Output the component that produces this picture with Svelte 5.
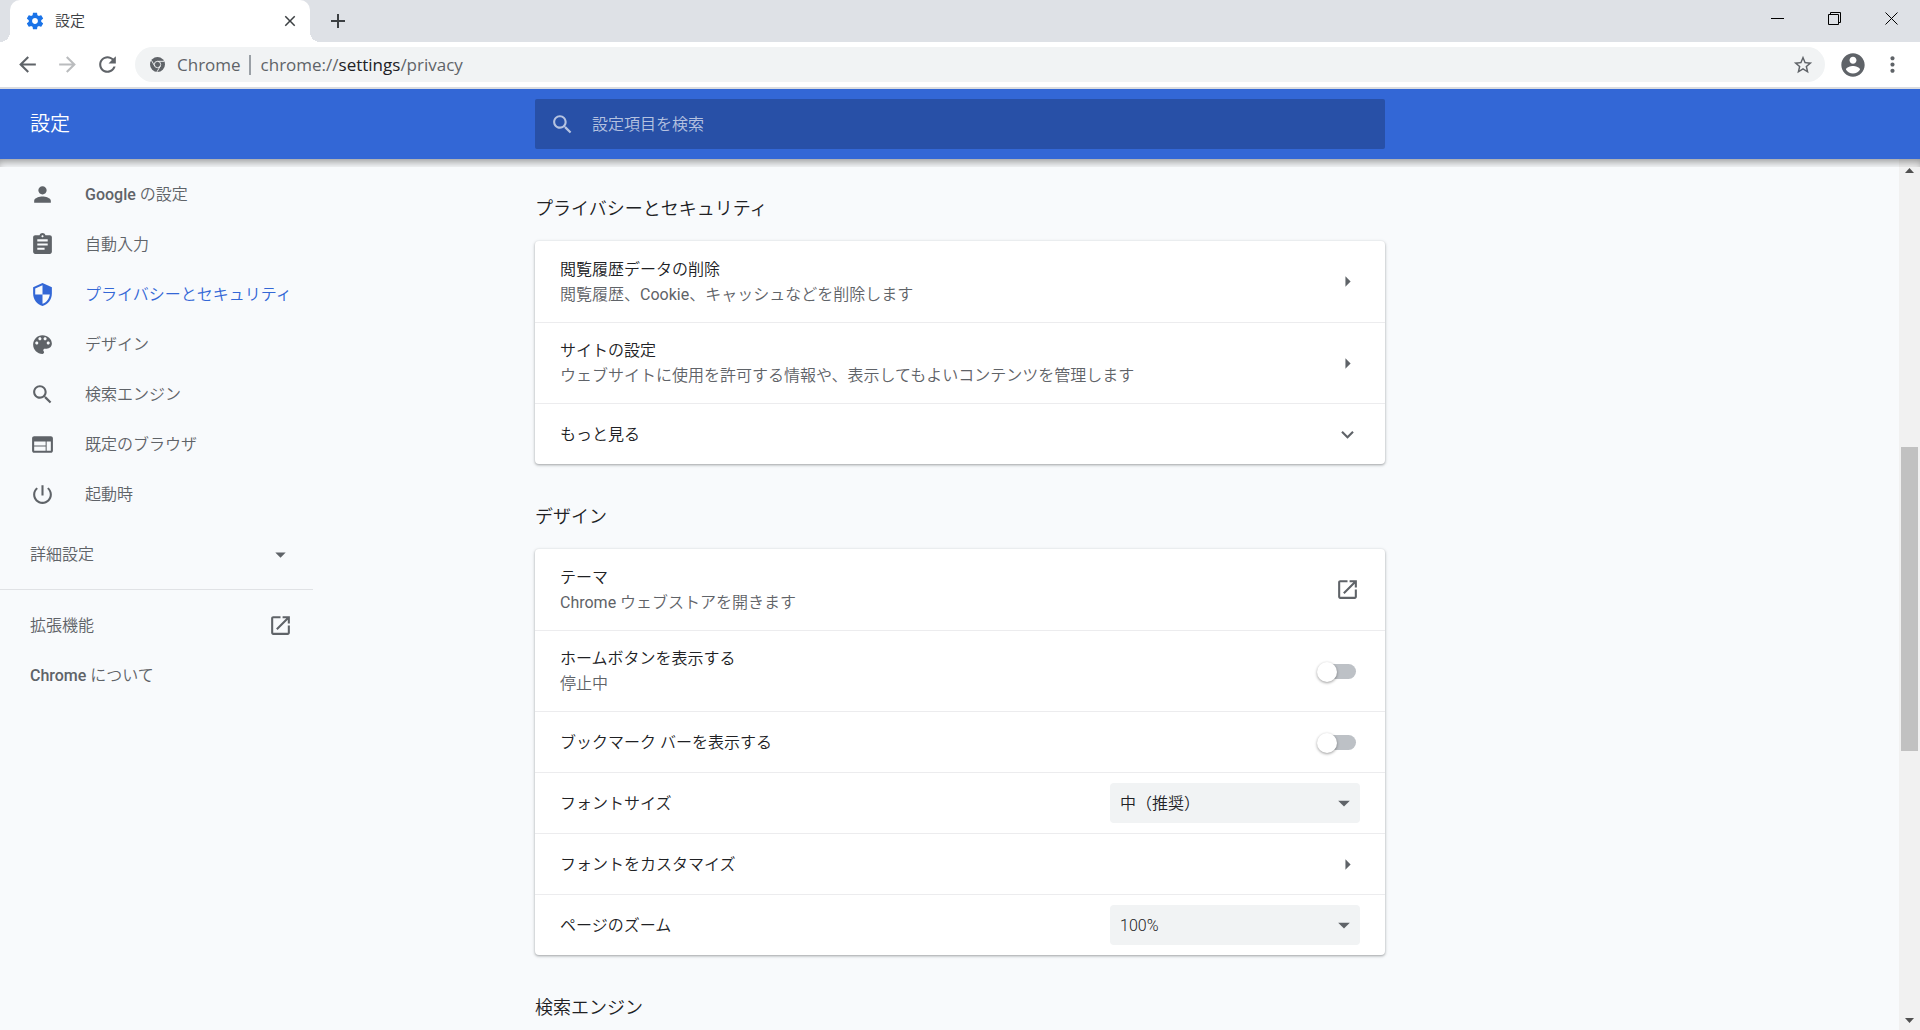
<script>
	const ICONS = {
		person: 'M12 12c2.21 0 4-1.79 4-4s-1.79-4-4-4-4 1.79-4 4 1.79 4 4 4zm0 2c-2.67 0-8 1.34-8 4v2h16v-2c0-2.66-5.33-4-8-4z',
		assignment: 'M19 3h-4.18C14.4 1.84 13.3 1 12 1c-1.3 0-2.4.84-2.82 2H5c-1.1 0-2 .9-2 2v14c0 1.1.9 2 2 2h14c1.1 0 2-.9 2-2V5c0-1.1-.9-2-2-2zm-7 0c.55 0 1 .45 1 1s-.45 1-1 1-1-.45-1-1 .45-1 1-1zm2 14H7v-2h7v2zm3-4H7v-2h10v2zm0-4H7V7h10v2z',
		security: 'M12 1L3 5v6c0 5.55 3.84 10.74 9 12 5.16-1.26 9-6.45 9-12V5l-9-4zm0 10.99h7c-.53 4.12-3.28 7.79-7 8.94V12H5V6.3l7-3.11v8.8z',
		palette: 'M12 3c-4.97 0-9 4.03-9 9s4.03 9 9 9c.83 0 1.5-.67 1.5-1.5 0-.39-.15-.74-.39-1.01-.23-.26-.38-.61-.38-.99 0-.83.67-1.5 1.5-1.5H16c2.76 0 5-2.24 5-5 0-4.42-4.03-8-9-8zm-5.5 9c-.83 0-1.5-.67-1.5-1.5S5.67 9 6.5 9 8 9.67 8 10.5 7.33 12 6.5 12zm3-4C8.67 8 8 7.33 8 6.5S8.67 5 9.5 5s1.5.67 1.5 1.5S10.33 8 9.5 8zm5 0c-.83 0-1.5-.67-1.5-1.5S13.67 5 14.5 5s1.5.67 1.5 1.5S15.33 8 14.5 8zm3 4c-.83 0-1.5-.67-1.5-1.5S16.67 9 17.5 9s1.5.67 1.5 1.5-.67 1.5-1.5 1.5z',
		search: 'M15.5 14h-.79l-.28-.27C15.41 12.59 16 11.11 16 9.5 16 5.91 13.09 3 9.5 3S3 5.91 3 9.5 5.91 16 9.5 16c1.61 0 3.09-.59 4.23-1.57l.27.28v.79l5 4.99L20.49 19l-4.99-5zm-6 0C7.01 14 5 11.99 5 9.5S7.01 5 9.5 5 14 7.01 14 9.5 11.99 14 9.5 14z',
		web: 'M20 4H4c-1.1 0-1.99.9-1.99 2L2 18c0 1.1.9 2 2 2h16c1.1 0 2-.9 2-2V6c0-1.1-.9-2-2-2zm-5 14H4v-4h11v4zm0-5H4V9h11v4zm5 5h-4V9h4v9z',
		power: 'M13 3h-2v10h2V3zm4.83 2.17l-1.42 1.42C17.99 7.86 19 9.81 19 12c0 3.87-3.13 7-7 7s-7-3.13-7-7c0-2.19 1.01-4.14 2.58-5.42L6.17 5.17C4.23 6.82 3 9.26 3 12c0 4.97 4.03 9 9 9s9-4.03 9-9c0-2.74-1.23-5.18-3.17-6.83z',
		external: 'M19 19H5V5h7V3H5c-1.11 0-2 .9-2 2v14c0 1.1.89 2 2 2h14c1.1 0 2-.9 2-2v-7h-2v7zM14 3v2h3.59l-9.83 9.83 1.41 1.41L19 6.41V10h2V3h-7z',
		arrowRight: 'M10 7l5 5-5 5z',
		arrowDown: 'M7 10l5 5 5-5z',
		expand: 'M16.59 8.59L12 13.17 7.41 8.59 6 10l6 6 6-6z',
		back: 'M20 11H7.83l5.59-5.59L12 4l-8 8 8 8 1.41-1.41L7.83 13H20v-2z',
		forward: 'M4 11h12.17l-5.59-5.59L12 4l8 8-8 8-1.41-1.41L16.17 13H4v-2z',
		reload: 'M17.65 6.35C16.2 4.9 14.21 4 12 4c-4.42 0-7.99 3.58-7.99 8s3.57 8 7.99 8c3.73 0 6.84-2.55 7.73-6h-2.08c-.82 2.33-3.04 4-5.65 4-3.31 0-6-2.69-6-6s2.69-6 6-6c1.66 0 3.14.69 4.22 1.78L13 11h7V4l-2.35 2.35z',
		gear: 'M19.43 12.98c.04-.32.07-.64.07-.98s-.03-.66-.07-.98l2.11-1.65c.19-.15.24-.42.12-.64l-2-3.46c-.12-.22-.39-.3-.61-.22l-2.49 1c-.52-.4-1.08-.73-1.69-.98l-.38-2.65C14.46 2.18 14.25 2 14 2h-4c-.25 0-.46.18-.49.42l-.38 2.65c-.61.25-1.17.59-1.69.98l-2.49-1c-.23-.09-.49 0-.61.22l-2 3.46c-.13.22-.07.49.12.64l2.11 1.65c-.04.32-.07.65-.07.98s.03.66.07.98l-2.11 1.65c-.19.15-.24.42-.12.64l2 3.46c.12.22.39.3.61.22l2.49-1c.52.4 1.08.73 1.69.98l.38 2.65c.03.24.24.42.49.42h4c.25 0 .46-.18.49-.42l.38-2.65c.61-.25 1.17-.59 1.69-.98l2.49 1c.23.09.49 0 .61-.22l2-3.46c.12-.22.07-.49-.12-.64l-2.11-1.65zM12 15.5c-1.93 0-3.5-1.57-3.5-3.5s1.57-3.5 3.5-3.5 3.5 1.57 3.5 3.5-1.57 3.5-3.5 3.5z',
		star: 'M22 9.24l-7.19-.62L12 2 9.19 8.63 2 9.24l5.46 4.73L5.82 21 12 17.27 18.18 21l-1.63-7.03L22 9.24zM12 15.4l-3.76 2.27 1-4.28-3.32-2.88 4.38-.38L12 6.1l1.71 4.04 4.38.38-3.32 2.88 1 4.28L12 15.4z',
		account: 'M12 2C6.48 2 2 6.48 2 12s4.48 10 10 10 10-4.48 10-10S17.52 2 12 2zm0 3c1.66 0 3 1.34 3 3s-1.34 3-3 3-3-1.34-3-3 1.34-3 3-3zm0 14.2c-2.5 0-4.71-1.28-6-3.22.03-1.99 4-3.08 6-3.08 1.99 0 5.97 1.09 6 3.08-1.29 1.94-3.5 3.22-6 3.22z',
		more: 'M12 8c1.1 0 2-.9 2-2s-.9-2-2-2-2 .9-2 2 .9 2 2 2zm0 2c-1.1 0-2 .9-2 2s.9 2 2 2 2-.9 2-2-.9-2-2-2zm0 6c-1.1 0-2 .9-2 2s.9 2 2 2 2-.9 2-2-.9-2-2-2z',
		close: 'M19 6.41L17.59 5 12 10.59 6.41 5 5 6.41 10.59 12 5 17.59 6.41 19 12 13.41 17.59 19 19 17.59 13.41 12z'
	};

	const menu = [
		{ icon: 'person', label: 'Google の設定' },
		{ icon: 'assignment', label: '自動入力' },
		{ icon: 'security', label: 'プライバシーとセキュリティ' },
		{ icon: 'palette', label: 'デザイン' },
		{ icon: 'search', label: '検索エンジン' },
		{ icon: 'web', label: '既定のブラウザ' },
		{ icon: 'power', label: '起動時' }
	];

	const sections = [
		{
			title: 'プライバシーとセキュリティ',
			rows: [
				{ type: 'link', icon: 'arrowRight', label: '閲覧履歴データの削除', sub: '閲覧履歴、Cookie、キャッシュなどを削除します' },
				{ type: 'link', icon: 'arrowRight', label: 'サイトの設定', sub: 'ウェブサイトに使用を許可する情報や、表示してもよいコンテンツを管理します' },
				{ type: 'link', icon: 'expand', label: 'もっと見る' }
			]
		},
		{
			title: 'デザイン',
			rows: [
				{ type: 'link', icon: 'external', label: 'テーマ', sub: 'Chrome ウェブストアを開きます' },
				{ type: 'toggle', id: 'home-button', label: 'ホームボタンを表示する', sub: '停止中' },
				{ type: 'toggle', id: 'bookmark-bar', label: 'ブックマーク バーを表示する' },
				{ type: 'select', id: 'font-size', label: 'フォントサイズ', options: ['中（推奨）', '極小', '小', '大', '極大'] },
				{ type: 'link', icon: 'arrowRight', label: 'フォントをカスタマイズ' },
				{ type: 'select', id: 'page-zoom', label: 'ページのズーム', options: ['100%', '75%', '125%', '150%'] }
			]
		},
		{ title: '検索エンジン', rows: [] }
	];

	let active = $state('security');
	let query = $state('');

	// odd parts are latin words, they get a heavier weight than the kana
	function parts(text) {
		return text.split(/([A-Za-z]+)/);
	}
</script>

{#snippet icon(name)}
	<svg class="icon" viewBox="0 0 24 24" aria-hidden="true"><path d={ICONS[name]} /></svg>
{/snippet}

{#snippet mixed(text)}
	{#each parts(text) as part, i}{#if i % 2}<span class="latin">{part}</span>{:else}{part}{/if}{/each}
{/snippet}

{#snippet rowText(row)}
	<span class="row-text">
		<span class="label">{@render mixed(row.label)}</span>
		{#if row.sub}<span class="sub">{@render mixed(row.sub)}</span>{/if}
	</span>
{/snippet}

<div class="window">
	<div class="tab-strip">
		<div class="tab">
			{@render icon('gear')}
			<span class="tab-title">設定</span>
			<button class="tab-close" aria-label="タブを閉じる">{@render icon('close')}</button>
		</div>
		<button class="new-tab" aria-label="新しいタブ">
			<svg viewBox="0 0 16 16"><path d="M8 1v14M1 8h14" /></svg>
		</button>
		<div class="window-buttons">
			<button aria-label="最小化"><svg viewBox="0 0 14 14"><path d="M0 6.5h13" /></svg></button>
			<button aria-label="元に戻す"><svg viewBox="0 0 14 14"><path d="M.5 2.500h10v10h-10zM2.5 2.500v-2h10v10h-2" /></svg></button>
			<button aria-label="閉じる"><svg viewBox="0 0 14 14"><path d="M.5 .5l12 12M12.5 .5l-12 12" /></svg></button>
		</div>
	</div>

	<div class="toolbar">
		<button aria-label="戻る">{@render icon('back')}</button>
		<button aria-label="進む" disabled>{@render icon('forward')}</button>
		<button aria-label="再読み込み">{@render icon('reload')}</button>
		<div class="omnibox">
			<svg class="site" viewBox="0 0 16 16" aria-hidden="true">
				<circle cx="8" cy="8" r="8" fill="#5f6368" />
				<g fill="none" stroke="#f1f3f4" stroke-width="1">
					<circle cx="8" cy="8" r="3.4" />
					<path d="M8 4.6h7.2M5.05 9.7L1.5 3.6M10.95 9.7L7.4 15.9" />
				</g>
			</svg>
			<span class="site-name">Chrome</span>
			<span class="url">chrome://<b>settings</b>/privacy</span>
			<button class="bookmark" aria-label="ブックマーク">{@render icon('star')}</button>
		</div>
		<button class="profile" aria-label="プロフィール">{@render icon('account')}</button>
		<button class="more" aria-label="メニュー">{@render icon('more')}</button>
	</div>

	<header>
		<h1>設定</h1>
		<label class="search">
			{@render icon('search')}
			<input type="text" bind:value={query} placeholder="設定項目を検索" aria-label="設定項目を検索" />
		</label>
	</header>

	<main>
		<nav>
			{#each menu as item}
				<a href="#{item.icon}" class:active={active === item.icon} onclick={() => (active = item.icon)}>
					{@render icon(item.icon)}
					<span>{@render mixed(item.label)}</span>
				</a>
			{/each}
			<button class="advanced"><span>詳細設定</span>{@render icon('arrowDown')}</button>
			<hr />
			<a class="plain" href="#extensions"><span>拡張機能</span>{@render icon('external')}</a>
			<a class="plain" href="#about"><span>{@render mixed('Chrome について')}</span></a>
		</nav>

		<div class="content">
			{#each sections as section}
				<section>
					<h2>{section.title}</h2>
					<div class="card">
						{#each section.rows as row}
							{#if row.type === 'link'}
								<button class="row" class:two={row.sub}>
									{@render rowText(row)}
									{@render icon(row.icon)}
								</button>
							{:else if row.type === 'toggle'}
								<label class="row" class:two={row.sub} for={row.id}>
									{@render rowText(row)}
									<input class="toggle" type="checkbox" id={row.id} />
								</label>
							{:else}
								<div class="row">
									<label for={row.id}>{@render rowText(row)}</label>
									<div class="select">
										<select id={row.id}>
											{#each row.options as option}
												<option>{option}</option>
											{/each}
										</select>
										{@render icon('arrowDown')}
									</div>
								</div>
							{/if}
						{/each}
					</div>
				</section>
			{/each}
		</div>

		<div class="scrollbar" aria-hidden="true">
			<svg viewBox="0 0 9 5"><path d="M0 5L4.500 0 9 5z" /></svg>
			<div class="track"><div class="thumb"></div></div>
			<svg viewBox="0 0 9 5"><path d="M0 0h9L4.500 5z" /></svg>
		</div>
	</main>
</div>

<style>
	:global(body) {
		margin: 0;
	}

	.window {
		height: 100vh;
		display: flex;
		flex-direction: column;
		overflow: hidden;
		background: #f8fafc;
		color: #202124;
		font: 350 16px/25px Roboto, 'Noto Sans CJK JP', sans-serif;
	}

	button {
		display: flex;
		align-items: center;
		justify-content: center;
		padding: 0;
		border: none;
		background: none;
		color: inherit;
		font: inherit;
	}

	input, select {
		font: inherit;
	}

	.icon {
		width: 25px;
		height: 25px;
		flex: none;
		fill: currentColor;
	}

	.latin {
		font-weight: 400;
	}

	/* browser frame */
	.tab-strip {
		display: flex;
		height: 42px;
		flex: none;
		background: #dee1e6;
	}

	.tab {
		position: relative;
		display: flex;
		align-items: center;
		box-sizing: border-box;
		width: 300px;
		margin-left: 10px;
		padding: 0 10px 0 15px;
		background: #fff;
		border-radius: 10px 10px 0 0;
		color: #3c4043;
	}

	.tab::before, .tab::after {
		content: '';
		position: absolute;
		bottom: 0;
		width: 10px;
		height: 10px;
	}

	.tab::before {
		right: 100%;
		background: radial-gradient(circle at 0 0, #dee1e6 10px, #fff 10px);
	}

	.tab::after {
		left: 100%;
		background: radial-gradient(circle at 100% 0, #dee1e6 10px, #fff 10px);
	}

	.tab > .icon {
		width: 20px;
		height: 20px;
		color: #1a73e8;
	}

	.tab-title {
		flex: 1;
		margin-left: 10px;
		font-size: 15px;
	}

	.tab-close {
		width: 20px;
		height: 20px;
	}

	.tab-close .icon {
		width: 18px;
		height: 18px;
	}

	.new-tab {
		width: 35px;
		margin-left: 10px;
		color: #3c4043;
	}

	.new-tab svg {
		width: 16px;
		height: 16px;
		stroke: currentColor;
		stroke-width: 2;
	}

	.window-buttons {
		display: flex;
		margin-left: auto;
	}

	.window-buttons button {
		width: 57px;
		height: 38px;
		color: #000;
	}

	.window-buttons svg {
		width: 14px;
		height: 14px;
		fill: none;
		stroke: currentColor;
	}

	.toolbar {
		display: flex;
		align-items: center;
		flex: none;
		height: 45px;
		padding: 0 10px;
		gap: 5px;
		background: #fff;
		border-bottom: 2px solid #dadce0;
		color: #5f6368;
	}

	.toolbar > button {
		width: 35px;
		height: 35px;
	}

	.toolbar > button:disabled {
		color: #babcbe;
	}

	.toolbar > button .icon {
		width: 25px;
		height: 25px;
	}

	.omnibox {
		display: flex;
		align-items: center;
		flex: 1;
		height: 35px;
		margin-left: 5px;
		padding: 0 11px 0 15px;
		background: #f1f3f4;
		border-radius: 18px;
		color: #5f6368;
		font-family: 'Open Sans', sans-serif;
		font-weight: 400;
		font-size: 17px;
	}

	.site {
		width: 15px;
		height: 15px;
		margin-right: 12px;
	}

	.site-name {
		line-height: 20px;
		padding-right: 8px;
		margin-right: 10px;
		border-right: 2px solid #9aa0a6;
	}

	.url {
		flex: 1;
	}

	.url b {
		color: #202124;
		font-weight: 400;
	}

	.bookmark .icon {
		width: 22px;
		height: 22px;
	}

	.toolbar > .profile {
		margin-left: 5px;
	}

	.toolbar > .profile .icon {
		width: 28px;
		height: 28px;
	}

	/* settings page */
	header, main {
		display: grid;
		grid-template-columns: minmax(313px, 1fr) minmax(0, 850px) minmax(21px, 1fr);
	}

	header {
		position: relative;
		z-index: 1;
		flex: none;
		align-items: center;
		height: 70px;
		background: #3367d6;
		color: #fff;
	}

	header::after {
		content: '';
		position: absolute;
		top: 100%;
		left: 0;
		right: 0;
		height: 8px;
		box-shadow: inset 0 6px 8px -3px rgba(0, 0, 0, 0.4);
		pointer-events: none;
	}

	h1 {
		margin: 0;
		padding-left: 30px;
		font-size: 20px;
		font-weight: 350;
	}

	.search {
		display: flex;
		align-items: center;
		height: 50px;
		padding: 0 15px;
		border-radius: 2px;
		background: #2850a7;
		color: rgba(255, 255, 255, 0.66);
	}

	.search input {
		flex: 1;
		margin-left: 15px;
		border: none;
		outline: none;
		background: none;
		color: #fff;
	}

	.search input::placeholder {
		color: rgba(255, 255, 255, 0.66);
	}

	main {
		flex: 1;
		min-height: 0;
	}

	nav {
		width: 313px;
		padding-top: 10px;
		color: #5f6368;
	}

	nav .latin {
		font-weight: 500;
	}

	nav a, .advanced {
		display: flex;
		align-items: center;
		gap: 30px;
		height: 50px;
		padding: 0 20px 0 30px;
		color: inherit;
		text-decoration: none;
	}

	nav a.active {
		color: #3367d6;
	}

	.advanced {
		box-sizing: border-box;
		width: 100%;
		margin: 10px 0;
	}

	.plain, .advanced {
		justify-content: space-between;
	}

	hr {
		margin: 0 0 10px;
		border: none;
		border-top: 1px solid #e0e2e5;
	}

	.content {
		min-height: 0;
		overflow: hidden;
		/* leaves room for the card shadows beside the clipped column */
		margin: 0 -5px;
		padding: 38px 5px 0;
	}

	section + section {
		margin-top: 41px;
	}

	h2 {
		margin: 0 0 20px;
		font-size: 18px;
		line-height: 24px;
		font-weight: 350;
	}

	.card {
		background: #fff;
		border-radius: 4px;
		box-shadow: 0 1px 2px rgba(60, 64, 67, 0.3), 0 1px 3px 1px rgba(60, 64, 67, 0.15);
	}

	.row {
		display: flex;
		align-items: center;
		justify-content: space-between;
		box-sizing: border-box;
		width: 100%;
		min-height: 61px;
		padding: 0 25px;
		text-align: left;
	}

	.row.two {
		min-height: 81px;
	}

	.row + .row {
		border-top: 1px solid #ececee;
	}

	.row .icon {
		color: #5f6368;
	}

	.label, .sub {
		display: block;
	}

	.sub {
		color: #5f6368;
	}

	.toggle {
		appearance: none;
		position: relative;
		width: 35px;
		height: 15px;
		margin: 0 4px;
		border-radius: 8px;
		background: #bdc1c6;
	}

	.toggle::before {
		content: '';
		position: absolute;
		top: -2px;
		left: -4px;
		width: 20px;
		height: 20px;
		border-radius: 50%;
		background: #fff;
		box-shadow: 0 1px 3px rgba(0, 0, 0, 0.4);
	}

	.toggle:checked {
		background: #8ab4f8;
	}

	.toggle:checked::before {
		left: 19px;
		background: #1a73e8;
	}

	.select {
		position: relative;
	}

	select {
		appearance: none;
		width: 250px;
		height: 40px;
		padding: 0 40px 0 10px;
		border: none;
		border-radius: 4px;
		background: #f1f3f4;
		color: #202124;
	}

	.select .icon {
		position: absolute;
		right: 2px;
		top: 6px;
		width: 28px;
		height: 28px;
		pointer-events: none;
	}

	.scrollbar {
		display: flex;
		flex-direction: column;
		align-items: center;
		justify-self: end;
		width: 21px;
		background: #f1f1f1;
	}

	.scrollbar svg {
		width: 9px;
		height: 5px;
		margin: 9px 0 7px;
		fill: #505050;
	}

	.track {
		flex: 1;
		display: flex;
		flex-direction: column;
		width: 17px;
	}

	.track::before, .track::after {
		content: '';
		flex: 267;
	}

	.track::after {
		flex: 258;
	}

	.thumb {
		flex: 305;
		background: #c1c1c1;
	}
</style>
